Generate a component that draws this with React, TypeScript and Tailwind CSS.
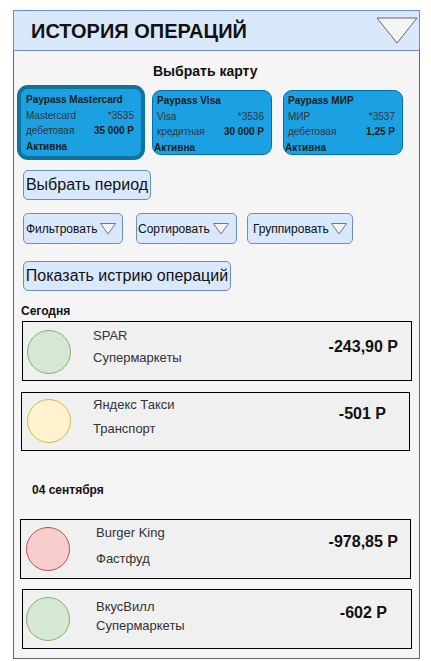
import type { ReactNode } from 'react'

function Triangle({ className }: { className: string }) {
  return (
    <svg className={className} viewBox="0 0 42 27">
      <polygon points="1,1 41,1 21,26" fill="#f5f5f5" stroke="#666666" strokeWidth="1" />
    </svg>
  )
}

function SmallTriangle() {
  return (
    <svg className="w-[16px] h-[12px] shrink-0" viewBox="0 0 16 12">
      <polygon points="0.5,0.5 15.5,0.5 8,11" fill="#f5f5f5" stroke="#777777" strokeWidth="1" />
    </svg>
  )
}

interface CardProps {
  title: string
  system: string
  number: string
  kind: string
  balance: string
  selected?: boolean
  wrap: string
}

function BankCard({ title, system, number, kind, balance, selected, wrap }: CardProps) {
  return (
    <div
      className={
        selected
          ? 'w-[128px] h-[75px] border-4 border-[#10739e] rounded-[11px] bg-[#1ba1e2] flex flex-col pl-[5px] pr-[7px] pt-[3px] text-[10px] leading-[15.5px] text-[#1a1a1a] shrink-0'
          : 'w-[120px] h-[65px] border border-[#006eaf] rounded-[9px] bg-[#1ba1e2] flex flex-col pl-[4px] pr-[7px] pt-[2px] text-[10px] leading-[15.5px] text-[#1a1a1a] shrink-0 ' + wrap
      }
    >
      <div className="font-bold">{title}</div>
      <div className="flex justify-between text-[#333]">
        <span>{system}</span>
        <span>{number}</span>
      </div>
      <div className="flex justify-between">
        <span className="text-[#333]">{kind}</span>
        <span className="font-bold">{balance}</span>
      </div>
      <div className={selected ? 'font-bold' : 'font-bold -ml-[3px]'}>Активна</div>
    </div>
  )
}

function BlueButton({ className, children }: { className: string; children: ReactNode }) {
  return (
    <div
      className={
        'border border-[#6c8ebf] bg-[#dae8fc] rounded-[5px] flex items-center text-[#111] ' + className
      }
    >
      {children}
    </div>
  )
}

interface Tx {
  name: string
  category: string
  amount: string
  fill: string
  box: string
  circle: string
  text: string
  value: string
}

const today: Tx[] = [
  {
    name: 'SPAR',
    category: 'Супермаркеты',
    amount: '-243,90 Р',
    fill: 'bg-[#d5e8d4] border-[#82b366]',
    box: 'mt-[3px] ml-[8px] w-[390px] h-[60px]',
    circle: 'mt-[8px] ml-[4px]',
    text: 'ml-[22px] mt-[6px] gap-[6px]',
    value: 'mr-[13px] mt-[15px]',
  },
  {
    name: 'Яндекс Такси',
    category: 'Транспорт',
    amount: '-501 Р',
    fill: 'bg-[#fff2cc] border-[#d6b656]',
    box: 'mt-[11px] ml-[7px] w-[389px] h-[59px]',
    circle: 'mt-[6px] ml-[5px]',
    text: 'ml-[22px] mt-[4px] gap-[8px]',
    value: 'mr-[23px] mt-[11px]',
  },
]

const september: Tx[] = [
  {
    name: 'Burger King',
    category: 'Фастфуд',
    amount: '-978,85 Р',
    fill: 'bg-[#f8cecc] border-[#b85450]',
    box: 'mt-[22px] ml-[6px] w-[391px] h-[60px]',
    circle: 'mt-[7px] ml-[5px]',
    text: 'ml-[26px] mt-[5px] gap-[10px]',
    value: 'mr-[12px] mt-[12px]',
  },
  {
    name: 'ВкусВилл',
    category: 'Супермаркеты',
    amount: '-602 Р',
    fill: 'bg-[#d5e8d4] border-[#82b366]',
    box: 'mt-[10px] ml-[8px] w-[390px] h-[60px]',
    circle: 'mt-[7px] ml-[3px]',
    text: 'ml-[26px] mt-[9px] gap-[3px]',
    value: 'mr-[24px] mt-[13px]',
  },
]

function TxRow({ tx }: { tx: Tx }) {
  return (
    <div className={'border border-black bg-[#f0f0f0] flex items-start shrink-0 ' + tx.box}>
      <div className={'w-[44px] h-[44px] rounded-full border shrink-0 ' + tx.fill + ' ' + tx.circle} />
      <div className={'flex flex-col text-[13px] leading-[16px] text-[#333] ' + tx.text}>
        <span>{tx.name}</span>
        <span>{tx.category}</span>
      </div>
      <div className={'ml-auto text-[16px] leading-[19px] font-bold text-[#111] ' + tx.value}>{tx.amount}</div>
    </div>
  )
}

export default function App() {
  return (
    <div className="min-h-screen bg-white pt-[10px] pl-[13px] font-['Liberation_Sans',Arial,sans-serif]">
      <div className="w-[407px] h-[41px] border border-[#6c8ebf] bg-[#dae8fc] flex items-center justify-between pl-[17px] pr-px">
        <span className="text-[20px] font-bold text-[#111] leading-[24px]">ИСТОРИЯ ОПЕРАЦИЙ</span>
        <Triangle className="w-[42px] h-[27px]" />
      </div>

      <div className="w-[407px] h-[608px] border-x border-b border-[#666] bg-[#f5f5f5] flex flex-col">
        <div className="mt-[12px] ml-[139px] text-[14px] leading-[17px] font-bold text-[#111]">Выбрать карту</div>

        <div className="mt-[5px] ml-[3px] flex items-center">
          <BankCard
            selected
            title="Paypass Mastercard"
            system="Mastercard"
            number="*3535"
            kind="дебетовая"
            balance="35 000 Р"
            wrap=""
          />
          <BankCard
            title="Paypass Visa"
            system="Visa"
            number="*3536"
            kind="кредитная"
            balance="30 000 Р"
            wrap="ml-[7px]"
          />
          <BankCard
            title="Paypass МИР"
            system="МИР"
            number="*3537"
            kind="дебетовая"
            balance="1,25 Р"
            wrap="ml-[11px]"
          />
        </div>

        <BlueButton className="mt-[10px] ml-[9px] w-[128px] h-[30px] justify-center text-[16px]">
          Выбрать период
        </BlueButton>

        <div className="mt-[13px] ml-[9px] flex">
          <BlueButton className="w-[100px] h-[31px] pl-[2px] gap-[3px] text-[12px]">
            Фильтровать
            <SmallTriangle />
          </BlueButton>
          <BlueButton className="ml-[13px] w-[101px] h-[31px] pl-[1px] gap-[3px] text-[12px]">
            Сортировать
            <SmallTriangle />
          </BlueButton>
          <BlueButton className="ml-[10px] w-[106px] h-[31px] pl-[5px] gap-[2px] text-[12px]">
            Группировать
            <SmallTriangle />
          </BlueButton>
        </div>

        <BlueButton className="mt-[17px] ml-[9px] w-[208px] h-[30px] justify-center text-[16px]">
          Показать истрию операций
        </BlueButton>

        <div className="mt-[13px] ml-[7px] text-[12px] leading-[14px] font-bold text-[#111]">Сегодня</div>
        {today.map((tx) => (
          <TxRow key={tx.name} tx={tx} />
        ))}

        <div className="mt-[32px] ml-[18px] text-[12px] leading-[14px] font-bold text-[#111]">04 сентября</div>
        {september.map((tx) => (
          <TxRow key={tx.name} tx={tx} />
        ))}
      </div>
    </div>
  )
}
